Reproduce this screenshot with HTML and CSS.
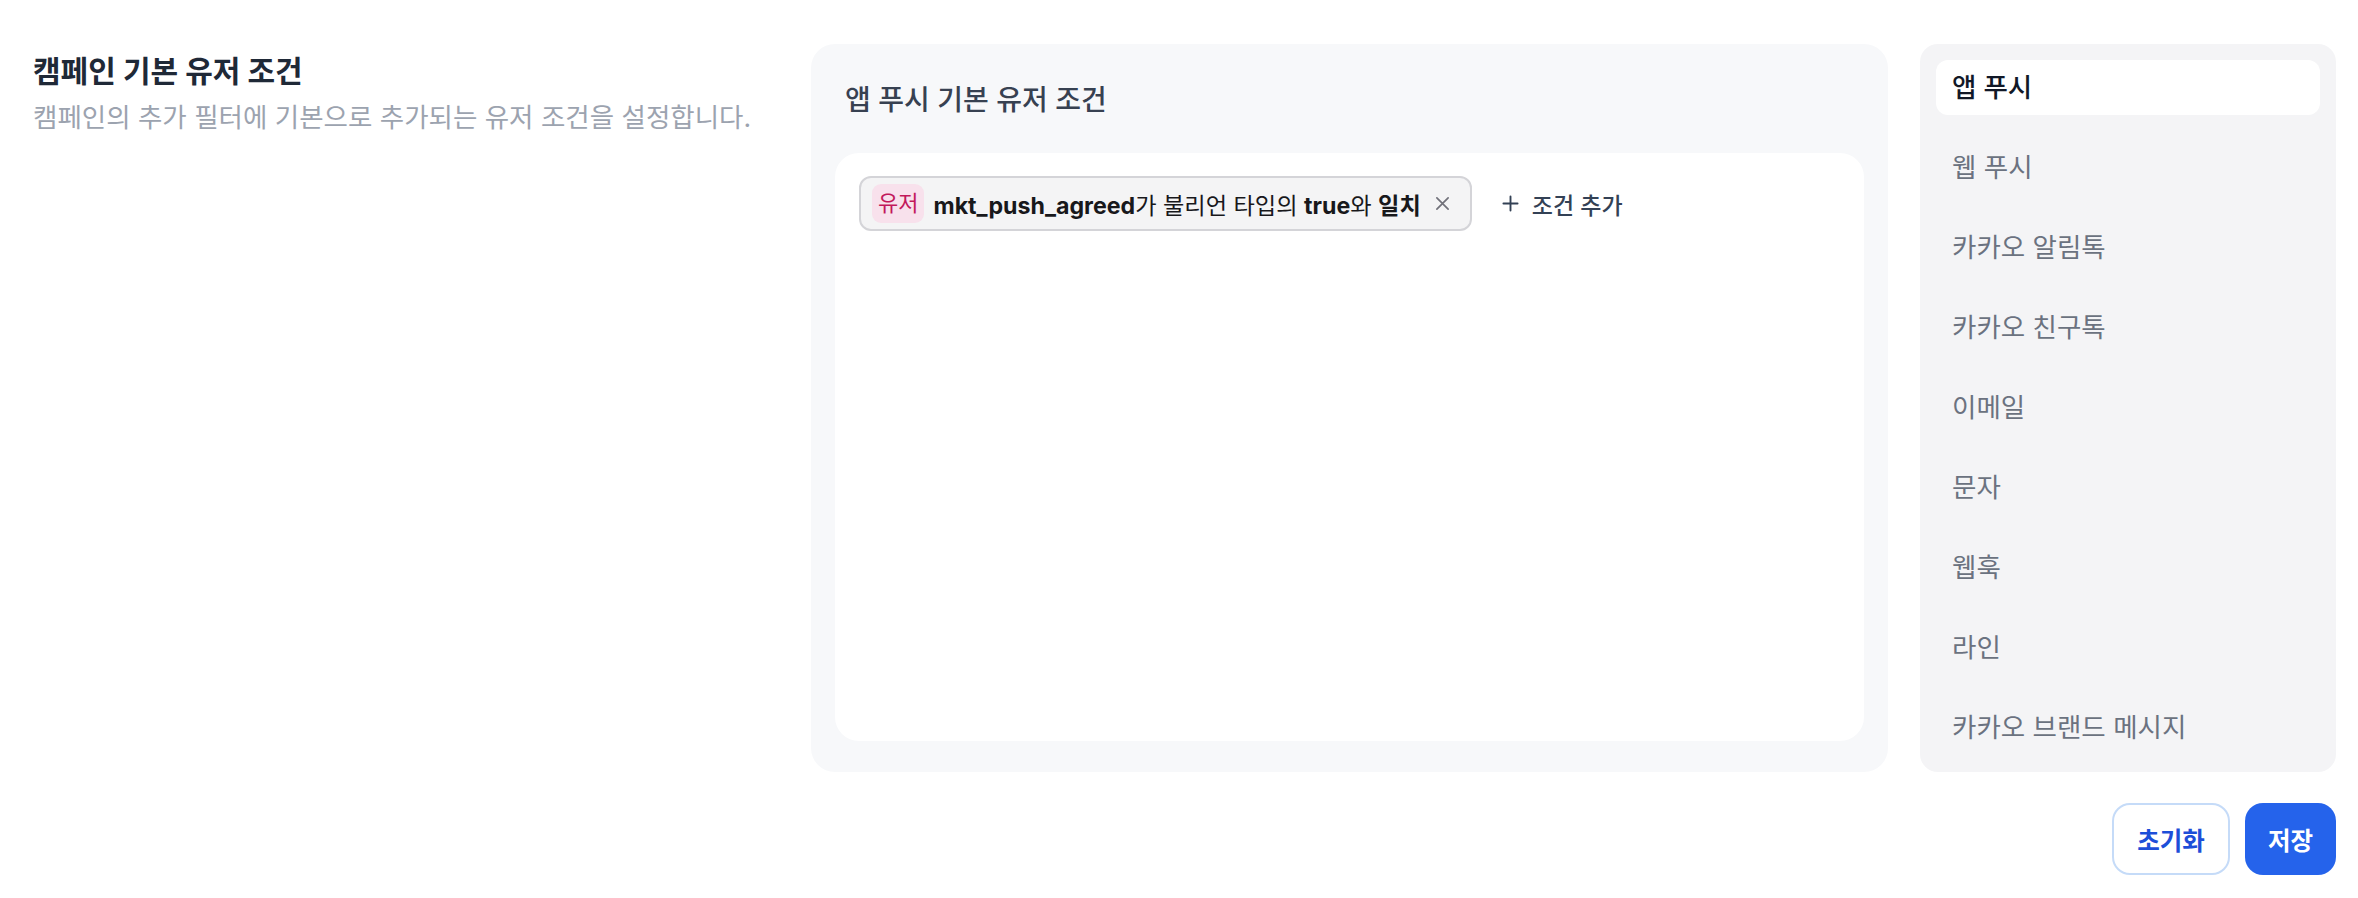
FILE: index.html
```html
<!DOCTYPE html>
<html lang="ko">
<head>
<meta charset="utf-8">
<title>캠페인 기본 유저 조건</title>
<link rel="stylesheet" href="styles.css">
</head>
<body>

<div class="page">
	<div class="layout">
		<div class="intro">
			<h1>캠페인 기본 유저 조건</h1>
			<p>캠페인의 추가 필터에 기본으로 추가되는 유저 조건을 설정합니다.</p>
		</div>

		<div class="panel">
			<h2>앱 푸시 기본 유저 조건</h2>
			<div class="box">
				<div class="filters">
					<div class="chip">
						<span class="badge">유저</span>
						<span class="cond"><b>mkt_push_agreed</b>가 불리언 타입의 <b>true</b>와 <b>일치</b></span>
						<svg class="close" viewBox="0 0 16 16" width="15" height="15"><path d="M2 2L14 14M14 2L2 14" stroke="#71717a" stroke-width="1.8" fill="none" stroke-linecap="round"/></svg>
					</div>
					<button class="add">
						<svg viewBox="0 0 18 18" width="17" height="17"><path d="M9 1.5V16.5M1.5 9H16.5" stroke="#334155" stroke-width="2" fill="none" stroke-linecap="round"/></svg>
						조건 추가
					</button>
				</div>
			</div>
		</div>

		<ul class="channels">
			<li class="on">앱 푸시</li>
			<li>웹 푸시</li>
			<li>카카오 알림톡</li>
			<li>카카오 친구톡</li>
			<li>이메일</li>
			<li>문자</li>
			<li>웹훅</li>
			<li>라인</li>
			<li>카카오 브랜드 메시지</li>
		</ul>
	</div>

	<div class="actions">
		<button class="btn reset">초기화</button>
		<button class="btn save">저장</button>
	</div>
</div>

</body>
</html>
```

FILE: styles.css
```css
* {
	box-sizing: border-box;
}
body {
	margin: 0;
	font-family: "Inter", "Noto Sans CJK KR", sans-serif;
	background-color: #fff;
}
.page {
	padding: 44px 22px 0 33px;
}
.layout {
	display: flex;
	gap: 32px;
	height: 728px;
}
.intro {
	width: 746px;
	flex-shrink: 0;
	padding-top: 7px;
}
.intro h1 {
	margin: 0;
	font-size: 30px;
	line-height: 40px;
	font-weight: 700;
	color: #1f2937;
}
.intro p {
	margin: 8px 0 0;
	font-size: 26.5px;
	line-height: 36px;
	color: #9ca3af;
}
.panel {
	flex: 1;
	display: flex;
	flex-direction: column;
	background-color: #f7f8fa;
	border-radius: 24px;
	padding: 24px 24px 31px;
}
.panel h2 {
	margin: 12px 10px 33px;
	font-size: 28px;
	line-height: 40px;
	font-weight: 500;
	color: #374151;
}
.box {
	flex: 1;
	background-color: #fff;
	border-radius: 24px;
	padding: 23px 24px;
}
.filters {
	display: flex;
	align-items: center;
	gap: 30px;
}
.chip {
	display: flex;
	align-items: center;
	height: 55px;
	padding: 0 20px 0 11px;
	border: 2px solid #d4d4d8;
	border-radius: 12px;
	background-color: #f4f4f5;
}
.badge {
	height: 39px;
	line-height: 39px;
	padding: 0 6px;
	margin-right: 9px;
	border-radius: 9px;
	background-color: #f8e1ec;
	color: #c2185b;
	font-size: 22px;
}
.cond {
	font-size: 23.2px;
	color: #18181b;
}
.cond b {
	font-weight: 700;
}
.close {
	margin-left: 14px;
}
.add {
	display: flex;
	align-items: center;
	gap: 13px;
	padding: 0;
	border: none;
	background: none;
	font-family: inherit;
	font-size: 23px;
	font-weight: 500;
	color: #334155;
}
.channels {
	width: 416px;
	flex-shrink: 0;
	list-style: none;
	margin: 0;
	padding: 16px;
	display: flex;
	flex-direction: column;
	gap: 25px;
	background-color: #f4f4f6;
	border-radius: 18px;
}
.channels li {
	height: 55px;
	line-height: 55px;
	padding: 0 16px;
	border-radius: 12px;
	font-size: 26.5px;
	color: #6b7280;
}
.channels li.on {
	background-color: #fff;
	color: #111827;
	font-weight: 500;
}
.actions {
	display: flex;
	justify-content: flex-end;
	gap: 15px;
	margin-top: 31px;
}
.btn {
	height: 72px;
	padding: 0 23px;
	border-radius: 18px;
	font-family: inherit;
	font-size: 24.5px;
	font-weight: 700;
}
.reset {
	background-color: #fff;
	border: 2px solid #c5dbf8;
	color: #1d4ed8;
}
.save {
	background-color: #2563eb;
	border: none;
	color: #fff;
}
```
